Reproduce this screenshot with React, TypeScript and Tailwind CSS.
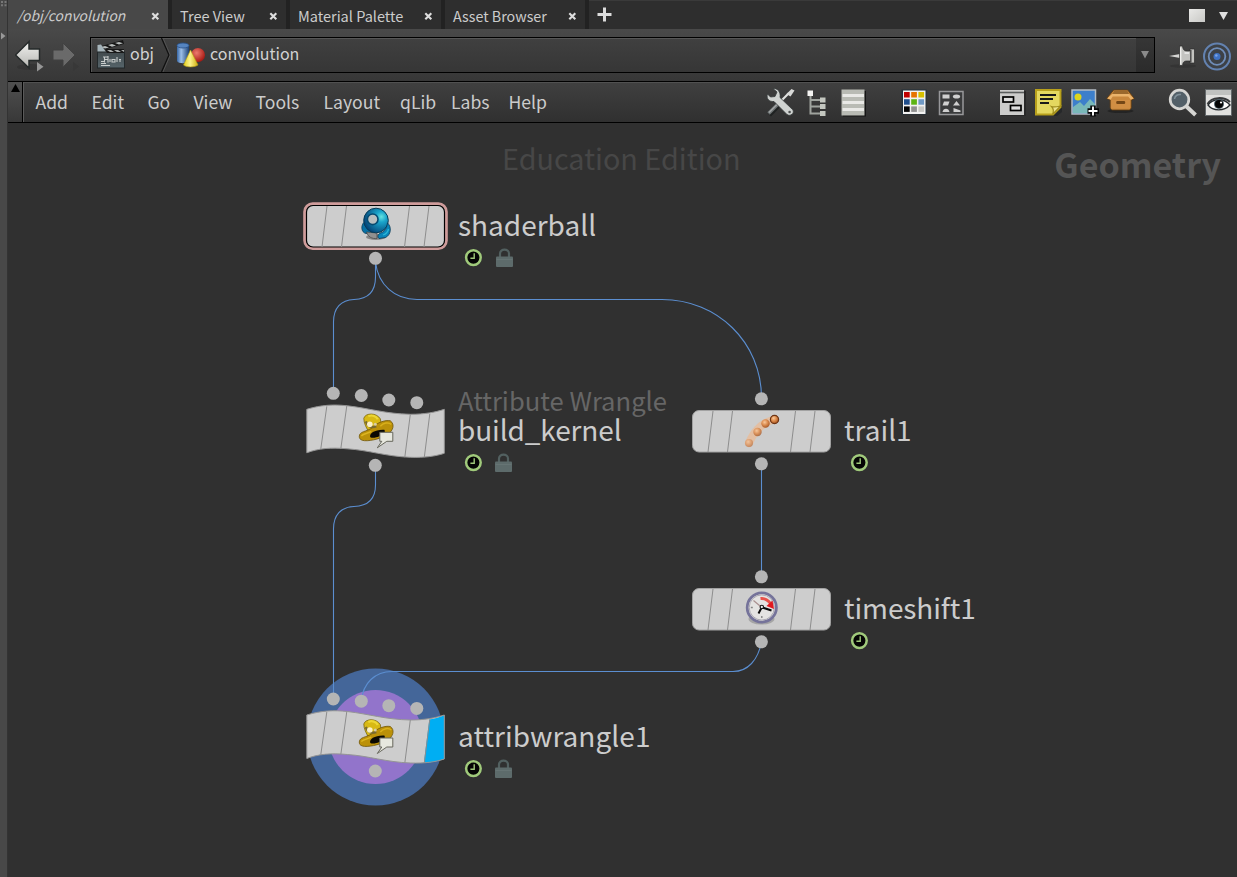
import type { ReactNode } from 'react';

const FONT = "font-['Noto_Sans_CJK_SC','Source_Sans_Pro',sans-serif]";

/* ---------- tab bar ---------- */

function CloseMark() {
  return (
    <svg width="9" height="9" viewBox="0 0 9 9" className="mt-[3px] shrink-0">
      <path d="M1.3 1.3 7.3 7.3M7.3 1.3 1.3 7.3" stroke="#dedede" strokeWidth="2.1" />
    </svg>
  );
}

function Tab({ label, width, text, active }: { label: string; width: string; text: string; active?: boolean }) {
  return (
    <div
      className={`flex shrink-0 items-center justify-between ${width} ${
        active
          ? 'h-[29px] bg-[#484848] pl-[9px] pr-2'
          : 'h-[29px] border-l-4 border-[#222222] bg-[#2e2e2e] pl-2 pr-[8px]'
      }`}
    >
      <span className={`whitespace-nowrap pt-px leading-[27px] text-[#cccccc] ${text}`}>{label}</span>
      <CloseMark />
    </div>
  );
}

function TabBar() {
  return (
    <div className="flex h-[29px] items-start bg-[#2e2e2e] shadow-[inset_0_1px_0_#3a3a3a]">
      <Tab label="/obj/convolution" width="w-[160px]" text="text-[13.9px] italic" active />
      <Tab label="Tree View" width="w-[118px]" text="text-[14.5px]" />
      <Tab label="Material Palette" width="w-[155px]" text="text-[14.5px]" />
      <Tab label="Asset Browser" width="w-[144px]" text="text-[14.3px]" />
      <div className="flex h-[29px] grow items-center border-l-4 border-[#222222] pl-[8px] pr-[9px]">
        <svg width="15" height="15" viewBox="0 0 15 15">
          <path d="M7.500 0.500V14.500M0.500 7.500H14.500" stroke="#dcdcdc" strokeWidth="3" />
        </svg>
        <div className="ml-auto flex items-center gap-[14px] pt-0.5">
          <div className="h-[13px] w-4 bg-gradient-to-br from-[#e9e9e7] to-[#c9c9c6]" />
          <svg width="9" height="8" viewBox="0 0 9 8">
            <path d="M0 0H9L4.500 8Z" fill="#e0e0e0" />
          </svg>
        </div>
      </div>
    </div>
  );
}

/* ---------- path bar ---------- */

function ArrowIcon({ dim }: { dim?: boolean }) {
  return (
    <svg width="30" height="34" viewBox="0 0 30 34" className="shrink-0">
      <defs>
        <linearGradient id="arrowFill" x1="0" y1="0" x2="0" y2="1">
          <stop offset="0" stopColor="#f2f2f0" />
          <stop offset="1" stopColor="#b5b5b1" />
        </linearGradient>
      </defs>
      {dim ? (
        <>
          <path d="M2 12H12V5L24 17 12 29V22H2Z" fill="#6a6a6a" stroke="#414141" />
          <path d="M22 24V33L28 28.500Z" fill="#383838" />
        </>
      ) : (
        <>
          <ellipse cx="15" cy="29" rx="13" ry="3" fill="#2c2c2c" opacity="0.5" />
          <path d="M0.500 17 14 3.500V11H24.500V22.500H14V30Z" fill="url(#arrowFill)" stroke="#252a2a" strokeWidth="1.500" />
          <path d="M22 24V33.500L28.500 28.700Z" fill="#969696" />
        </>
      )}
    </svg>
  );
}

function ClapperIcon() {
  return (
    <svg width="30" height="32" viewBox="0 0 30 32" className="shrink-0">
      <defs>
        <linearGradient id="slate" x1="0" y1="0" x2="0" y2="1">
          <stop offset="0" stopColor="#414a4d" />
          <stop offset="1" stopColor="#56646a" />
        </linearGradient>
      </defs>
      <path d="M2 8 27 1 28 5 3 12Z" fill="#161616" />
      <path d="M5 8 9 7 13 8.500 9 9.500ZM12 6 16 5 20 6.500 16 7.700ZM19 4 23 3 27 4.300 23 5.500Z" fill="#b9bdbc" />
      <path d="M1.500 6 5 5.500 11 14.500H1.500Z" fill="#a5b4ba" />
      <rect x="1.500" y="13" width="27" height="16" fill="url(#slate)" stroke="#23292b" />
      <path d="M9 10H28V14H11Z" fill="#181818" />
      <path d="M11 11H15L18 13H14ZM18 11H22L25 13H21ZM25 11H28V13Z" fill="#a9adac" />
      <path d="M7 18H12M8.500 17.500V23.500M5 22.500H9M12 17V23.500M9 20.500H12M14 23V20M16 20.500H19V23H16ZM21 18V23M24 20V23M23 20.500H25M5 26.500H14M5 24.500H10" stroke="#c8cccb" strokeWidth="1.100" fill="none" />
    </svg>
  );
}

function ShapesIcon() {
  return (
    <svg width="30" height="28" viewBox="0 0 30 28" className="shrink-0">
      <defs>
        <linearGradient id="cyl" x1="0" x2="1">
          <stop offset="0" stopColor="#3767a6" />
          <stop offset="0.35" stopColor="#9dbfe8" />
          <stop offset="1" stopColor="#1c4278" />
        </linearGradient>
        <radialGradient id="redball" cx="0.4" cy="0.35" r="0.65">
          <stop offset="0" stopColor="#ec7a6e" />
          <stop offset="1" stopColor="#a81a14" />
        </radialGradient>
        <linearGradient id="cone" x1="0" x2="1">
          <stop offset="0" stopColor="#e3cf1c" />
          <stop offset="0.45" stopColor="#fbf28c" />
          <stop offset="1" stopColor="#cfae0d" />
        </linearGradient>
      </defs>
      <path d="M1 4.500V20C2 23 12 23 13 20V4.500Z" fill="url(#cyl)" />
      <ellipse cx="7" cy="4.500" rx="6" ry="2.500" fill="#5584c0" stroke="#274f86" strokeWidth="0.800" />
      <circle cx="22" cy="14" r="7" fill="url(#redball)" />
      <path d="M14.500 9 22 24C19 26.500 10 26.500 7.500 24Z" fill="url(#cone)" stroke="#b59c12" strokeWidth="0.600" />
    </svg>
  );
}

function PinIcon() {
  return (
    <svg width="29" height="24" viewBox="0 0 29 24" className="mt-px shrink-0">
      <ellipse cx="15" cy="22" rx="13" ry="1.800" fill="#2f2f2f" opacity="0.6" />
      <path d="M1 12 12 10V14Z" fill="#d5d5d3" />
      <path d="M11.500 2H14.500C15 5.500 16 7 19 7H22V5H26.500V19H22V17H19C16 17 15 18 14.500 21.500H11.500Z" fill="#c3c3c0" stroke="#2b2b2b" strokeWidth="0.700" />
      <path d="M12.700 3.500V20.500M16.500 9H21" stroke="#f0f0ee" strokeWidth="1.300" />
      <path d="M22.800 6V18.500" stroke="#454545" strokeWidth="1.400" />
    </svg>
  );
}

function TargetIcon() {
  return (
    <svg width="30" height="30" viewBox="0 0 30 30" className="mt-px shrink-0">
      <circle cx="15" cy="15.500" r="13" fill="#3d4146" stroke="#6382b0" strokeWidth="2" />
      <circle cx="15" cy="15.500" r="8.300" fill="none" stroke="#6f8db8" strokeWidth="1.800" />
      <circle cx="15" cy="15.500" r="3.500" fill="#3f72c4" />
      <circle cx="14.300" cy="14.500" r="1.300" fill="#7ba4e4" />
    </svg>
  );
}

function PathBar() {
  return (
    <div className="flex h-[52px] items-center bg-gradient-to-b from-[#494949] to-[#373737] pr-[5px]">
      <div className="flex w-[82px] gap-[6px] pl-[7px]">
        <ArrowIcon />
        <ArrowIcon dim />
      </div>
      <div className="flex h-9 w-[1065px] shrink-0 items-center border border-black bg-gradient-to-b from-[#404040] to-[#363636] shadow-[inset_1px_1px_0_#565656]">
        <div className="flex w-[70px] items-center pl-[5px]">
          <ClapperIcon />
          <span className="-mt-1 ml-1 text-[16px] leading-6 text-[#d2d2d2]">obj</span>
        </div>
        <svg width="10" height="34" viewBox="0 0 10 34" className="shrink-0">
          <path d="M0.500 0 8 17 0.500 34" fill="none" stroke="#111" strokeWidth="1.300" />
          <path d="M2 0 9.300 17 2 34" fill="none" stroke="#595959" strokeWidth="0.800" />
        </svg>
        <div className="flex grow items-center pl-[5px]">
          <ShapesIcon />
          <span className="-mt-1 ml-[4px] text-[16px] leading-6 text-[#d2d2d2]">convolution</span>
        </div>
        <div className="flex h-[34px] w-[18px] items-center justify-center bg-gradient-to-b from-[#363636] to-[#2b2b2b]">
          <svg width="8" height="8" viewBox="0 0 8 8">
            <path d="M0 0H8L4 7.500Z" fill="#8a8a8a" />
          </svg>
        </div>
      </div>
      <div className="ml-auto flex items-center gap-[5px]">
        <PinIcon />
        <TargetIcon />
      </div>
    </div>
  );
}

/* ---------- menu bar ---------- */

const MENUS: { label: string; width: string }[] = [
  { label: 'Add', width: 'w-[56px]' },
  { label: 'Edit', width: 'w-[56px]' },
  { label: 'Go', width: 'w-[46px]' },
  { label: 'View', width: 'w-[62px]' },
  { label: 'Tools', width: 'w-[68px]' },
  { label: 'Layout', width: 'w-[76.500px]' },
  { label: 'qLib', width: 'w-[51px]' },
  { label: 'Labs', width: 'w-[57.500px]' },
  { label: 'Help', width: 'w-[60px]' },
];

function Icon({ children, gap = '' }: { children: ReactNode; gap?: string }) {
  return (
    <svg width="30" height="30" viewBox="0 0 30 30" className={`shrink-0 ${gap}`}>
      {children}
    </svg>
  );
}

const SWATCHES = ['#c00000', '#e67400', '#d8c000', '#1f4e8c', '#5cb414', '#6f99c4', '#050505', '#909090', '#c8c8c4'];

function MenuIcons() {
  return (
    <div className="flex items-center">
      <Icon>
        <path d="M3 27.500 14 16.500" stroke="#1f2222" strokeWidth="5.500" />
        <path d="M2.500 26.500 13 16" stroke="#6e7374" strokeWidth="3.600" />
        <path d="M3 25.500 12 16.500" stroke="#a4a8a8" strokeWidth="1.200" />
        <path d="M12.500 16.500 23 6" stroke="#e1e2e0" strokeWidth="2.200" />
        <path d="M20.500 7 25.500 2 28.500 3.500 24.500 9.500Z" fill="#d9dad8" />
        <path d="M7 1.500 11 5 9 9.500 4.500 10 1.500 7C0 11.500 3 15 8 14.500L21 27.500C24 30 29.500 26 26.500 22.500L14 10.500C15 5 11.500 1 7 1.500Z" fill="#cfd2d0" stroke="#363b3b" strokeWidth="0.800" />
        <circle cx="23.600" cy="25" r="1.300" fill="#4c5050" />
      </Icon>
      <Icon gap="ml-[6px]">
        <path d="M8.500 9V26.500H19M8.500 13H19M8.500 19.500H19" stroke="#9fa39e" strokeWidth="2" fill="none" />
        <rect x="5.500" y="3.500" width="5.500" height="5.500" fill="#f4f4f2" />
        <rect x="18" y="10.500" width="5.500" height="5" fill="#c4c7c0" />
        <rect x="18" y="17" width="5.500" height="5" fill="#c4c7c0" />
        <rect x="18" y="24" width="5.500" height="5" fill="#c4c7c0" />
      </Icon>
      <Icon gap="ml-[6px]">
        <rect x="5" y="4" width="23" height="25.500" fill="#151515" />
        <rect x="3.500" y="2.500" width="23" height="26" fill="#b9bbb4" />
        <path d="M4.500 8.500H26M4.500 15.500H26M4.500 22.500H26" stroke="#e9e9e6" strokeWidth="3.200" />
      </Icon>
      <Icon gap="ml-[31px]">
        <rect x="2.500" y="2.500" width="25" height="25" fill="#23313b" />
        <rect x="4" y="3.500" width="22.500" height="23.500" fill="#f2f2f2" />
        {SWATCHES.map((color, i) => (
          <rect key={color} x={5 + (i % 3) * 7.2} y={5 + Math.floor(i / 3) * 7.2} width="5.700" height="5.500" fill={color} />
        ))}
      </Icon>
      <Icon gap="ml-[7px]">
        <rect x="3.500" y="4.500" width="23.500" height="23" fill="#3a3b3c" stroke="#98989a" strokeWidth="1.500" />
        <g fill="#d0d0d0">
          <rect x="6.500" y="7.500" width="7" height="4" />
          <ellipse cx="20.500" cy="9.500" rx="3.600" ry="2.100" />
          <path d="M8 14.500H13.500L12 18.500H6.500ZM20.500 14 24 18.500H17ZM6.500 25C7 20.500 13 20.500 13.500 25ZM17.500 21 24.500 23.500V25H17.500Z" />
        </g>
      </Icon>
      <Icon gap="ml-[31px]">
        <rect x="4" y="4" width="25" height="25" fill="#292929" />
        <rect x="3" y="3" width="24" height="25" fill="#cccccb" />
        <path d="M3 5.500H27" stroke="#5a5d5d" strokeWidth="1.600" />
        <rect x="6" y="10" width="10.500" height="5" fill="#dedede" stroke="#000" strokeWidth="1.700" />
        <rect x="13.500" y="18.500" width="10.500" height="5" fill="#dedede" stroke="#000" strokeWidth="1.700" />
      </Icon>
      <Icon gap="ml-[6px]">
        <path d="M5 5H29V25L24 29H5Z" fill="#26282a" />
        <path d="M3 3H27.500V20L20 27.500H3Z" fill="#e4d860" stroke="#b8a01c" strokeWidth="2" />
        <path d="M7 8H23M7 12H20M7 16H16" stroke="#191919" strokeWidth="1.900" />
        <path d="M19.500 27.500C21 24 20 21 18.500 19.500 22 20.500 25 19.500 27.500 19Z" fill="#ede48a" stroke="#a08e1e" strokeWidth="1.200" />
      </Icon>
      <Icon gap="ml-[6px]">
        <rect x="3" y="3" width="23.500" height="24" fill="#3d7fcb" stroke="#b4bcc3" strokeWidth="1.500" />
        <circle cx="9" cy="10" r="3.500" fill="#ddd51e" />
        <path d="M4 20 11 15 15 19 21 12 26 17V26H4Z" fill="#79b8b9" />
        <path d="M24 18.500V29.500M18.500 24H30" stroke="#080808" strokeWidth="5.500" />
        <path d="M24 19.500V28.500M19.500 24H28.500" stroke="#fff" strokeWidth="1.900" />
      </Icon>
      <Icon gap="ml-[6px]">
        <ellipse cx="15.500" cy="24" rx="13" ry="2" fill="#242424" />
        <g transform="translate(0.700 0)">
          <path d="M8 3H22L28.500 11.500 26 13H25.500V21L24 23H6L4.500 21V13L1 11.500Z" fill="#c8873c" stroke="#613c11" strokeWidth="0.800" />
          <path d="M8.500 3.500H21.500L23.500 7.500H6.500Z" fill="#9a682c" />
          <path d="M6.500 7H23.500L28 11.500 25 12.500 22.500 9.500H7L5 12.500 1.500 11.500Z" fill="#eab36b" />
          <path d="M5.500 13H24.500V21.500H5.500Z" fill="#d18e43" />
          <rect x="10.500" y="14" width="9" height="3" rx="1.200" fill="#744716" />
        </g>
      </Icon>
      <Icon gap="ml-[32px]">
        <path d="M19.500 19.500 28.500 28" stroke="#d6d6d3" strokeWidth="4" />
        <circle cx="12.500" cy="12.500" r="9.300" fill="#536068" stroke="#d6d6d3" strokeWidth="2.700" />
        <path d="M7.500 12C8 8.500 11 7 14 7.500" stroke="#81919a" strokeWidth="1.500" fill="none" />
      </Icon>
      <Icon gap="ml-[6px]">
        <rect x="2.500" y="2.500" width="26" height="26" fill="#e1e1df" stroke="#63686a" />
        <path d="M3 3H28V8H3Z" fill="#c0c2c0" />
        <path d="M5 18C10 11 21 11 27 18 21 24.500 10 24.500 5 18Z" fill="#fff" stroke="#252b2e" strokeWidth="1.300" />
        <path d="M4.500 17C9 9.500 21 9.500 27 15" fill="none" stroke="#36383a" strokeWidth="2" />
        <circle cx="16" cy="17" r="5" fill="#4e6068" />
        <circle cx="16" cy="17" r="4" fill="#050505" />
        <circle cx="18" cy="15.500" r="1.100" fill="#fff" />
      </Icon>
    </div>
  );
}

function MenuBar() {
  return (
    <div className="flex h-[42px] border-y border-black bg-gradient-to-b from-[#404040] to-[#303030] shadow-[inset_0_1px_0_#515151]">
      <div className="flex w-[15px] shrink-0 justify-center border-r border-black bg-gradient-to-b from-[#505050] to-[#383838] pt-[2px]">
        <svg width="9" height="8" viewBox="0 0 9 8">
          <path d="M4.500 0 9 8H0Z" fill="#000" />
        </svg>
      </div>
      <div className="flex grow items-center border-l border-[#5a5a5a] pl-[11.500px]">
        {MENUS.map((m) => (
          <span
            key={m.label}
            className={`shrink-0 whitespace-nowrap text-[17.600px] leading-[38px] text-[#cccccc] ${m.width}`}
          >
            {m.label}
          </span>
        ))}
      </div>
      <div className="flex shrink-0 items-center pr-1">
        <MenuIcons />
      </div>
    </div>
  );
}

/* ---------- network canvas ---------- */

const WIRES = [
  'M375.500 258V277C375.500 291 368 299 354 299.500C341 300 333.500 308 333.500 322V393',
  'M375.500 262C378 285 395 299.500 417 299.500H662C717 299.500 761.500 342 761.500 398',
  'M375.500 465V485C375.500 499 368 506 354 506.500C341 507 333.500 515 333.500 529V699',
  'M761.500 464V577',
  'M761.500 642C758 660 748 671.500 733 671.500H392C375 671.500 363 683 361.300 701',
];

function Dot({ x, y }: { x: number; y: number }) {
  return <circle cx={x} cy={y} r="6.500" fill="#b5b5b5" />;
}

function BoxNode({ x, y, selected, children }: { x: number; y: number; selected?: boolean; children: ReactNode }) {
  return (
    <g transform={`translate(${x} ${y})`}>
      {selected && <rect x="-1.300" y="-1.300" width="141.600" height="44.800" rx="8" fill="#303030" stroke="#cf9c9b" strokeWidth="3" />}
      <rect x="0.500" y="0.500" width="138" height="41.500" rx="6.500" fill="#cdcdcd" stroke={selected ? '#000' : '#a2a2a2'} strokeWidth={selected ? 1.2 : 1} />
      <path d="M21 1 16 42M40.500 1 35.500 42M103.500 1 98.500 42M123 1 118 42" stroke="#8d8d8d" strokeWidth="1" />
      {children}
    </g>
  );
}

function WrangleIcon() {
  return (
    <g>
      <path d="M57.500 14C59 8.500 70 8 74 14.500 75 18 74.500 22 73 25L62 27C60 23 57.500 19 57.500 14Z" fill="#d8b914" stroke="#7a6612" strokeWidth="0.800" />
      <path d="M62 12C66 10 70 12 71.500 15" stroke="#ecd634" strokeWidth="2.200" fill="none" />
      <path d="M53 32C53 27 60 27.500 66 23.500 71 18 79 15.500 84 16.500 89 20 87 27 80 31 73 35 61 37.500 56 36 53.500 35 53 34 53 32Z" fill="#bb9109" stroke="#705609" strokeWidth="0.800" />
      <path d="M74 22C77 18.500 82 17.500 85 20" fill="none" stroke="#d9b01b" strokeWidth="1.500" />
      <path d="M55 31.500C58 29 62 29 65 27" fill="none" stroke="#dcb522" strokeWidth="1.500" />
      <path d="M64 33C62.500 29 69 25 78 25.500 80 28 76 31 73 32 70 33.500 66 34 64 33Z" fill="#0a0903" />
      <path d="M59.500 17C61 21 64 24 70 22" stroke="#786a30" strokeWidth="2.400" fill="none" />
      <circle cx="63.500" cy="20" r="2.800" fill="#fff4d2" opacity="0.950" />
      <circle cx="69" cy="20" r="1.500" fill="#d8cda5" />
      <path d="M73.500 28H86.500V37H80.500L71 43.500 75.500 37H73.500Z" fill="#e7e8df" stroke="#67675c" strokeWidth="1" />
    </g>
  );
}

function WaveNode({ x, y, display }: { x: number; y: number; display?: boolean }) {
  const outline =
    'M0.500 5C15 0.500 28 0 41 1.500C63 4 79 9.500 104 10C118 10 129 8 138 5V49C129 52 118 53.500 104 53C79 52 63 46 41 44.500C25 43 12 44 0.500 48.500Z';
  return (
    <g transform={`translate(${x} ${y})`}>
      <path d={outline} fill="#cdcdcd" />
      {display && <path d="M123 9.500C129 8.500 134 7 138 5V49C131 51.500 124 52.500 117.500 53Z" fill="#00aef3" />}
      <path d="M20.500 2 14.500 44.500M40.500 1.500 34.500 44.500M104 10 98.500 53M123.500 9.500 118 53" stroke="#8d8d8d" strokeWidth="1" />
      <path d={outline} fill="none" stroke="#959595" strokeWidth="1" />
      <Dot x={27} y={-11} />
      <Dot x={55} y={-8.800} />
      <Dot x={82.500} y={-4.300} />
      <Dot x={110.500} y={-1.600} />
      <Dot x={69} y={61} />
      <WrangleIcon />
    </g>
  );
}

function ShaderBallIcon() {
  return (
    <g>
      <defs>
        <radialGradient id="ball" cx="0.72" cy="0.35" r="0.72">
          <stop offset="0" stopColor="#64e3e0" />
          <stop offset="0.3" stopColor="#1aa5cb" />
          <stop offset="1" stopColor="#054679" />
        </radialGradient>
      </defs>
      <ellipse cx="70" cy="32" rx="10" ry="3" fill="#888" />
      <path d="M58.500 17C54.500 20 55 27.500 60 28.500L67 28 64 20Z" fill="#0770a4" stroke="#063a58" strokeWidth="0.800" />
      <path d="M60.500 27 71 28 71 33.500C66 34 62 32 60.500 27Z" fill="#909090" stroke="#444" strokeWidth="0.700" />
      <circle cx="70" cy="15.500" r="12.300" fill="url(#ball)" stroke="#073b57" strokeWidth="1" />
      <path d="M81.500 18C86 22 85 30 79.500 32.500L73 33.500C70.500 31 73 28 76 27.500 79 26 81 22 81.500 18Z" fill="#0a84b8" stroke="#063a58" strokeWidth="0.800" />
      <circle cx="66.700" cy="14.300" r="5.300" fill="#b9bfc0" stroke="#064a70" strokeWidth="1.600" />
      <path d="M77 30C80 29 82 26.500 82.500 24" stroke="#29b6d7" strokeWidth="1.300" fill="none" />
    </g>
  );
}

function TrailIcon() {
  const beads: [number, number, number, number][] = [
    [57, 33, 4, 0.5],
    [65.5, 22, 4.2, 0.75],
    [73.5, 13.5, 4.2, 0.9],
    [82.500, 9.5, 4.4, 1],
  ];
  return (
    <g>
      <defs>
        <radialGradient id="bead" cx="0.4" cy="0.35" r="0.65">
          <stop offset="0" stopColor="#fbc99a" />
          <stop offset="0.5" stopColor="#dc8a4b" />
          <stop offset="1" stopColor="#a4501b" />
        </radialGradient>
      </defs>
      <path d="M57 33C61 24 67 14 82 9.500" fill="none" stroke="#e9bb98" strokeWidth="8" strokeLinecap="round" opacity="0.800" />
      {beads.map(([cx, cy, r, o]) => (
        <circle key={cx} cx={cx} cy={cy} r={r} fill="url(#bead)" opacity={o} />
      ))}
      <circle cx="82.500" cy="9.500" r="4.100" fill="none" stroke="#6b3416" strokeWidth="1.200" />
    </g>
  );
}

function TimeShiftIcon() {
  return (
    <g>
      <ellipse cx="69.500" cy="31" rx="13" ry="5.500" fill="#8a8a8a" opacity="0.600" />
      <circle cx="69.800" cy="19.500" r="14.600" fill="#e4e3e2" stroke="#75739a" strokeWidth="2.800" />
      <circle cx="69.800" cy="19.500" r="12.600" fill="none" stroke="#aaa8b2" strokeWidth="1" />
      <path d="M58.800 19.500H60.800M69.800 28V30" stroke="#858585" strokeWidth="1.400" />
      <path d="M61.500 12.500 69.500 19.300" stroke="#a98f8f" strokeWidth="1.200" />
      <path d="M68.500 10.500C73 10 76 12 78.500 15.500" fill="none" stroke="#e8534b" strokeWidth="3" />
      <path d="M74.500 18 80.500 12.500 82 21Z" fill="#e11920" />
      <path d="M79.500 22.500 69.800 19.300 66.500 25.500" fill="none" stroke="#0a0a0a" strokeWidth="2" />
      <circle cx="69.800" cy="19" r="1.700" fill="#eee" stroke="#111" strokeWidth="1.100" />
    </g>
  );
}

function ClockBadge() {
  return (
    <svg width="18" height="18" viewBox="0 0 18 18">
      <circle cx="9.400" cy="8.600" r="7.300" fill="#050505" stroke="#a0ca7b" strokeWidth="2.500" />
      <path d="M10.200 4.300V9.300H6.400" fill="none" stroke="#a0ca7b" strokeWidth="1.400" />
    </svg>
  );
}

function LockBadge() {
  return (
    <svg width="17" height="20" viewBox="0 0 17 20">
      <path d="M4 10V5.500C4 .2 13 .2 13 5.500V10" fill="none" stroke="#526060" strokeWidth="2.200" />
      <rect x="0" y="8.500" width="17" height="10.500" rx="1" fill="#5d6b6b" />
      <path d="M0.500 11.500H16.500" stroke="#667474" strokeWidth="1" />
    </svg>
  );
}

function NodeLabel({ name, kind, at, text, lock }: { name: string; kind?: string; at: string; text: string; lock?: string }) {
  return (
    <div className={`absolute whitespace-nowrap ${at}`}>
      {kind && <div className="absolute bottom-full left-0 -mb-[3px] text-[25.600px] leading-[28px] text-[#666666]">{kind}</div>}
      <div className={`leading-9 text-[#cccccc] ${text}`}>{name}</div>
      <div className="flex items-start pl-[6px] pt-[7px]">
        <ClockBadge />
        {lock && (
          <div className={`-mt-px ${lock}`}>
            <LockBadge />
          </div>
        )}
      </div>
    </div>
  );
}

function Canvas() {
  return (
    <div className="relative grow overflow-hidden bg-[#303030]">
      <div className="absolute left-[494px] top-[17px] whitespace-nowrap text-[28.800px] leading-9 text-[#474747]">Education Edition</div>
      <div className="absolute right-4 top-[19px] whitespace-nowrap text-[34px] font-bold leading-[44px] text-[#555555]">Geometry</div>
      <svg className="absolute left-0 top-0" width="1229" height="754" viewBox="8 123 1229 754">
        <circle cx="375.500" cy="737" r="68.500" fill="#446699" />
        <circle cx="375.500" cy="737" r="47" fill="#9274cb" />
        {WIRES.map((d) => (
          <path key={d} d={d} fill="none" stroke="#5b8ed0" strokeWidth="1.100" />
        ))}
        <BoxNode x={306} y={205} selected>
          <Dot x={69.500} y={53.300} />
          <ShaderBallIcon />
        </BoxNode>
        <WaveNode x={306.300} y={404.300} />
        <BoxNode x={692} y={410}>
          <Dot x={69.400} y={-11.200} />
          <Dot x={69.400} y={53.800} />
          <TrailIcon />
        </BoxNode>
        <BoxNode x={692} y={588}>
          <Dot x={69.400} y={-11.200} />
          <Dot x={69.400} y={53.800} />
          <TimeShiftIcon />
        </BoxNode>
        <WaveNode x={306.300} y={710} display />
      </svg>
      <NodeLabel name="shaderball" at="left-[450px] top-[83px]" text="text-[28px]" lock="ml-[14px]" />
      <NodeLabel name="build_kernel" kind="Attribute Wrangle" at="left-[450px] top-[288px]" text="text-[28px] tracking-[-0.1px]" lock="ml-[13px]" />
      <NodeLabel name="trail1" at="left-[836px] top-[288px]" text="text-[28px]" />
      <NodeLabel name="timeshift1" at="left-[836px] top-[466px]" text="text-[28px] tracking-[-0.1px]" />
      <NodeLabel name="attribwrangle1" at="left-[450px] top-[594px]" text="text-[28px] tracking-[0.050px]" lock="ml-[13px]" />
    </div>
  );
}

export default function App() {
  return (
    <div className={`flex h-[877px] w-[1237px] overflow-hidden bg-[#303030] ${FONT}`}>
      <div className="flex w-2 shrink-0 flex-col items-center border-r border-[#333] bg-[#484848] pt-px">
        <svg width="7" height="44" viewBox="0 0 7 44">
          <path d="M1 0H3V2H1ZM4.500 0H6.500V2H4.500ZM1 3.200H3V5.200H1ZM4.500 3.200H6.500V5.200H4.500Z" fill="#777" />
          <path d="M1 31.500V38.500L5.500 35Z" fill="#999" />
        </svg>
      </div>
      <div className="flex min-w-0 grow flex-col">
        <TabBar />
        <PathBar />
        <MenuBar />
        <Canvas />
      </div>
    </div>
  );
}
